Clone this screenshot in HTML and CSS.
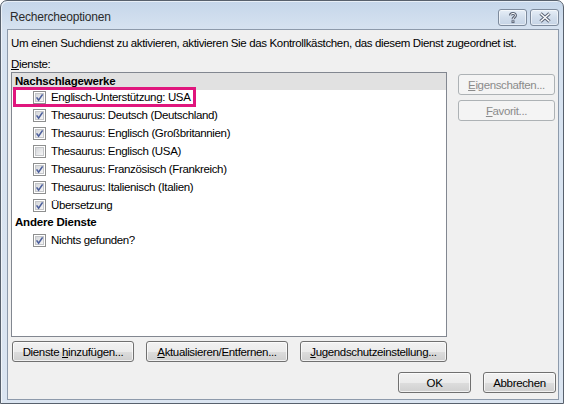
FILE: index.html
```html
<!doctype html>
<html lang="de">
<head>
	<meta charset="utf-8">
	<title>Rechercheoptionen</title>
	<link rel="stylesheet" href="styles.css">
</head>
<body>

	<svg class="defs" width="0" height="0">
		<defs>
			<linearGradient id="cb-fill" x1="0" y1="0" x2="1" y2="1">
				<stop offset="0" stop-color="#d3d5d8"/>
				<stop offset="1" stop-color="#f7f7f8"/>
			</linearGradient>
			<symbol id="cb-off" viewBox="0 0 13 13">
				<rect x="0.5" y="0.5" width="12" height="12" fill="#fff" stroke="#8e8f8f"/>
				<rect x="2.5" y="2.5" width="8" height="8" fill="url(#cb-fill)" stroke="#c4c6c9"/>
			</symbol>
			<symbol id="cb-on" viewBox="0 0 13 13">
				<rect x="0.5" y="0.5" width="12" height="12" fill="#fff" stroke="#8e8f8f"/>
				<rect x="2.5" y="2.5" width="8" height="8" fill="url(#cb-fill)" stroke="#c4c6c9"/>
				<path d="M3.6 6.4 L5.6 9.2 L9.6 3.4" fill="none" stroke="#4c5f9c" stroke-width="1.6"/>
			</symbol>
		</defs>
	</svg>

	<div class="window">
		<div class="titlebar">
			<span class="title">Rechercheoptionen</span>
			<div class="caption-buttons">
				<span class="caption-btn">
					<svg width="14" height="13" viewBox="0 0 14 13">
						<path d="M4.5 4.5 C4.5 1.8 9.5 1.8 9.5 4.4 C9.5 6.2 7 6.3 7 8.3" fill="none" stroke="#5c6678" stroke-width="3"/>
						<rect x="5.5" y="9.3" width="3" height="2.8" fill="#5c6678"/>
						<path d="M4.5 4.5 C4.5 1.8 9.5 1.8 9.5 4.4 C9.5 6.2 7 6.3 7 8.3" fill="none" stroke="#fff" stroke-width="1"/>
						<rect x="6.5" y="10.3" width="1" height="0.8" fill="#fff"/>
					</svg>
				</span>
				<span class="caption-btn">
					<svg width="14" height="11" viewBox="0 0 14 11">
						<path d="M2.5 1.5 L11.5 9.5 M11.5 1.5 L2.5 9.5" stroke="#5c6678" stroke-width="3.4"/>
						<path d="M2.5 1.5 L11.5 9.5 M11.5 1.5 L2.5 9.5" stroke="#fff" stroke-width="1.3"/>
					</svg>
				</span>
			</div>
		</div>

		<div class="client">
			<p class="intro">Um einen Suchdienst zu aktivieren, aktivieren Sie das Kontrollkästchen, das diesem Dienst zugeordnet ist.</p>
			<p class="label"><u>D</u>ienste:</p>

			<div class="main">
				<div class="listbox">
					<div class="group selected">Nachschlagewerke</div>
					<div class="item marked"><svg class="cb"><use href="#cb-on"/></svg>Englisch-Unterstützung: USA</div>
					<div class="item"><svg class="cb"><use href="#cb-on"/></svg>Thesaurus: Deutsch (Deutschland)</div>
					<div class="item"><svg class="cb"><use href="#cb-on"/></svg>Thesaurus: Englisch (Großbritannien)</div>
					<div class="item"><svg class="cb"><use href="#cb-off"/></svg>Thesaurus: Englisch (USA)</div>
					<div class="item"><svg class="cb"><use href="#cb-on"/></svg>Thesaurus: Französisch (Frankreich)</div>
					<div class="item"><svg class="cb"><use href="#cb-on"/></svg>Thesaurus: Italienisch (Italien)</div>
					<div class="item"><svg class="cb"><use href="#cb-on"/></svg>Übersetzung</div>
					<div class="group">Andere Dienste</div>
					<div class="item"><svg class="cb"><use href="#cb-on"/></svg>Nichts gefunden?</div>
				</div>

				<div class="side">
					<button class="btn side-btn" disabled><u>E</u>igenschaften...</button>
					<button class="btn side-btn" disabled><u>F</u>avorit...</button>
				</div>
			</div>

			<div class="service-buttons">
				<button class="btn btn-add">Dienste <u>h</u>inzufügen...</button>
				<button class="btn btn-update"><u>A</u>ktualisieren/Entfernen...</button>
				<button class="btn btn-parental"><u>J</u>ugendschutzeinstellung...</button>
			</div>

			<div class="dialog-buttons">
				<button class="btn btn-dialog">OK</button>
				<button class="btn btn-dialog">Abbrechen</button>
			</div>
		</div>
	</div>

</body>
</html>
```

FILE: styles.css
```css
:root {
	--ui-font: "Liberation Sans", Arial, sans-serif;
	--ui-size: 11.5px;
	--ui-spacing: -0.35px;
	--client: #f0f0f0;
	--mark: #e0167d;
}

html, body {
	margin: 0;
	background: #fff;
}
body {
	font-family: var(--ui-font);
	font-size: var(--ui-size);
	letter-spacing: var(--ui-spacing);
	color: #000;
}
p {
	margin: 0;
}
.defs {
	position: absolute;
}

/* window frame */
.window {
	width: 564px;
	height: 404px;
	box-sizing: border-box;
	border: 1px solid #58616d;
	border-radius: 7px 7px 0 0;
	background: linear-gradient(#c5d6ea, #d6e2f0 28px, #dbe5f1);
	box-shadow: inset 1px 1px 0 rgba(255, 255, 255, .6);
	padding: 0 4px 3px 6px;
	display: flex;
	flex-direction: column;
}
.titlebar {
	height: 28px;
	display: flex;
	justify-content: space-between;
	align-items: flex-start;
}
.title {
	padding: 9px 0 0 3px;
	font-size: 12px;
	letter-spacing: -0.2px;
	color: #2b2b2b;
}
.caption-buttons {
	display: flex;
	gap: 3px;
	margin-top: 8px;
}
.caption-btn {
	width: 27px;
	height: 15px;
	border: 1px solid #7d8a9c;
	border-radius: 3px;
	background: linear-gradient(#e6eef7, #d2deec 50%, #c6d4e6);
	box-shadow: inset 0 0 0 1px rgba(255, 255, 255, .55);
	display: flex;
	align-items: center;
	justify-content: center;
}

/* client area */
.client {
	flex: 1;
	background: var(--client);
	border: 1px solid #8d9aab;
	padding: 6px 2px 0 3px;
	line-height: 14px;
}
.intro {
	white-space: nowrap;
}
.label {
	margin-top: 7px;
}
.main {
	display: flex;
	margin-top: 1px;
}
.listbox {
	width: 436px;
	height: 265px;
	box-sizing: border-box;
	border: 1px solid #828790;
	background: #fff;
}
.group {
	height: 17px;
	line-height: 17px;
	padding-left: 3px;
	font-weight: bold;
	letter-spacing: -0.2px;
}
.group.selected {
	background: #e1e1e1;
	margin-bottom: -2px;
}
.item {
	height: 18px;
	display: flex;
	align-items: center;
	padding-left: 21px;
}
.item.marked {
	position: relative;
	width: fit-content;
	margin-left: 2px;
	padding: 0 5px 0 19px;
	outline: 3px solid var(--mark);
	outline-offset: -2px;
}
.cb {
	width: 13px;
	height: 13px;
	margin-right: 5px;
	flex: none;
}

.side {
	display: flex;
	flex-direction: column;
	gap: 5px;
	margin: 2px 0 0 11px;
}

/* buttons */
.btn {
	height: 21px;
	box-sizing: border-box;
	padding: 0;
	font-family: var(--ui-font);
	font-size: var(--ui-size);
	letter-spacing: var(--ui-spacing);
	color: #000;
	border: 1px solid #707070;
	border-radius: 3px;
	background: linear-gradient(#f2f2f2, #ebebeb 50%, #dddddd 51%, #cfcfcf);
	box-shadow: inset 0 0 0 1px rgba(255, 255, 255, .7);
}
.btn:disabled {
	color: #8b8b8b;
	border-color: #adb2b5;
	background: #f4f4f4;
	box-shadow: none;
}
.side-btn {
	width: 97px;
}
.service-buttons {
	display: flex;
	gap: 12px;
	margin: 4px 0 0 1px;
}
.btn-add {
	width: 122px;
}
.btn-update {
	width: 142px;
}
.btn-parental {
	width: 147px;
}
.dialog-buttons {
	display: flex;
	justify-content: flex-end;
	gap: 12px;
	margin-top: 10px;
}
.btn-dialog {
	width: 73px;
}
```
